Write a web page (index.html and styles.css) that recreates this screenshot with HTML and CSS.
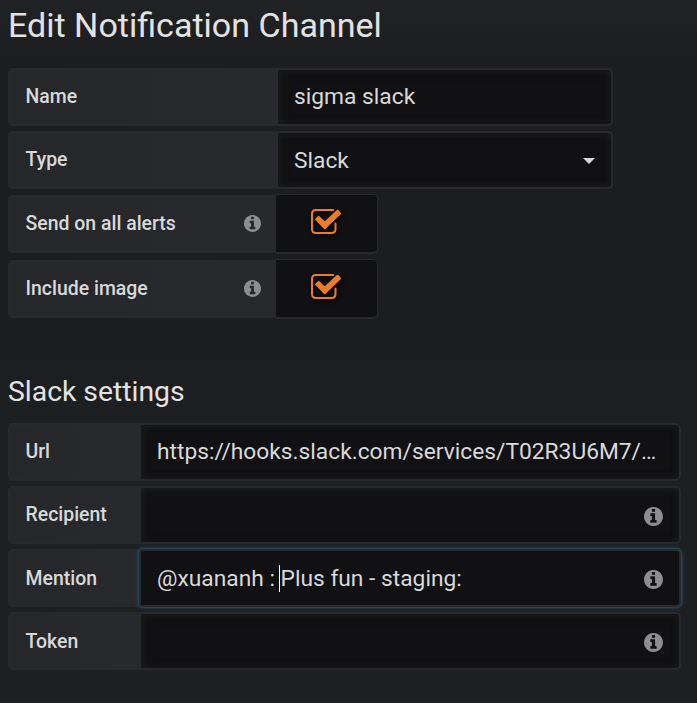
FILE: index.html
```html
<!DOCTYPE html>
<html lang="en">
<head>
<meta charset="utf-8">
<title>Edit Notification Channel</title>
<link rel="stylesheet" href="styles.css">
</head>
<body>
<svg class="sprite" aria-hidden="true">
  <symbol id="info" viewBox="0 128 1536 1536"><path d="M1024 1376v-160q0-14-9-23t-23-9h-96v-512q0-14-9-23t-23-9h-320q-14 0-23 9t-9 23v160q0 14 9 23t23 9h96v320h-96q-14 0-23 9t-9 23v160q0 14 9 23t23 9h448q14 0 23-9t9-23zm-128-896v-160q0-14-9-23t-23-9h-192q-14 0-23 9t-9 23v160q0 14 9 23t23 9h192q14 0 23-9t9-23zm640 416q0 209-103 385.500t-279.500 279.500-385.500 103-385.500-103-279.500-279.500-103-385.500 103-385.500 279.500-279.500 385.500-103 385.500 103 279.500 279.500 103 385.500z"/></symbol>
  <symbol id="check" viewBox="0 0 32 28"><path class="check-box" d="M23.200 2H6Q2 2 2 6V21Q2 25 6 25H21.500Q25.500 25 25.500 21V15.500"/><path class="check-tick" d="M6.200 11.200L8.700 8.900L14.700 14.700L27.500 2.800L30 5.500L14.700 20.300Z"/></symbol>
</svg>
<main class="page">
  <h1 class="title">Edit Notification Channel</h1>
  <form class="form">
    <section class="group general">
      <div class="row">
        <label class="label">Name</label>
        <div class="field">sigma slack</div>
      </div>
      <div class="row">
        <label class="label">Type</label>
        <div class="field select">Slack<span class="caret"></span></div>
      </div>
      <div class="row switch-row">
        <label class="label">Send on all alerts<svg class="info"><use href="#info"/></svg></label>
        <div class="switch"><svg class="check"><use href="#check"/></svg></div>
      </div>
      <div class="row switch-row">
        <label class="label">Include image<svg class="info"><use href="#info"/></svg></label>
        <div class="switch"><svg class="check"><use href="#check"/></svg></div>
      </div>
    </section>
    <h2 class="subtitle">Slack settings</h2>
    <section class="group settings">
      <div class="row">
        <label class="label">Url</label>
        <div class="field">https://hooks.slack.com/services/T02R3U6M7/…</div>
      </div>
      <div class="row">
        <label class="label">Recipient</label>
        <div class="field"><svg class="info"><use href="#info"/></svg></div>
      </div>
      <div class="row">
        <label class="label low">Mention</label>
        <div class="field focused"><span>@xuananh : </span><span class="cursor"></span><span>Plus fun - staging:</span><svg class="info"><use href="#info"/></svg></div>
      </div>
      <div class="row">
        <label class="label low">Token</label>
        <div class="field"><svg class="info"><use href="#info"/></svg></div>
      </div>
    </section>
  </form>
</main>
</body>
</html>
```
FILE: styles.css
```css
* { box-sizing: border-box; }
body {
  margin: 0;
  height: 703px;
  overflow: hidden;
  background: linear-gradient(#212224 0, #1c1d1f 60px, #1c1d1f 330px, #1e1f21 430px, #1e1f21 100%);
  color: #d8d9da;
  font-family: Roboto, sans-serif;
}
.sprite { display: none; }
.page { padding: 0 16px 0 8px; }
.title, .subtitle { margin: 0; font-weight: 400; white-space: nowrap; }
.title { height: 68px; padding-top: 5px; font-size: 34.05px; line-height: 40px; color: #e3e3e3; }
.subtitle { height: 57px; padding-top: 9px; margin-top: 48px; font-size: 28.35px; line-height: 34px; color: #e3e3e3; }
.group { display: flex; flex-direction: column; gap: 5px; }
.general { width: 605px; }
.settings { width: 673px; }
.row { display: flex; height: 58px; }
.label {
  display: flex;
  align-items: center;
  justify-content: space-between;
  flex: none;
  width: 268px;
  padding: 0 15.5px 1.5px 15.5px;
  border: 2px solid #28292b;
  border-right: 0;
  border-radius: 5px 0 0 5px;
  background: linear-gradient(90deg, #262729, #28292d);
  font-size: 19.45px;
  font-weight: 500;
}
.label.low { padding-bottom: 0; }
.settings .label { width: 131px; }
.field {
  display: flex;
  align-items: center;
  flex: 1;
  min-width: 0;
  padding: 0 16px 1px;
  border: 2px solid #28292b;
  border-radius: 0 5px 5px 0;
  background: #111113;
  box-shadow: inset 2px 2px 8px #1a1a1c, inset -1px -1px 6px #19191b;
  font-size: 22.77px;
  white-space: pre;
}
.field.select { padding-bottom: 0; }
.field.focused { border-radius: 3px 5px 5px 3px; padding-bottom: 0; box-shadow: 0 0 2px 1px #2b4a61, 0 0 6px #273f50; z-index: 1; }
.field .info { width: 19px; height: 19px; margin: 3px 0 0 auto; }
.info { width: 17px; height: 17px; fill: #8e8e8e; }
.cursor { width: 1px; height: 27px; margin: 0 1px 0 -2px; background: #fff; }
.caret { margin: 1px 0 0 auto; border: 6px solid transparent; border-top-color: #d8d9da; border-bottom: 0; }
.switch-row { margin-top: 1px; }
.switch-row + .switch-row { margin-top: 2px; }
.switch {
  display: flex;
  align-items: flex-start;
  justify-content: center;
  width: 102px;
  height: 60px;
  margin-top: -1px;
  padding-top: 13px;
  border: solid #28292b;
  border-width: 1px 1px 2px 0;
  border-radius: 0 5px 5px 0;
  background: #111113;
}
.check { width: 32px; height: 28px; margin-right: 2px; filter: drop-shadow(2px 2px 2px #000); }
.check-box { fill: none; stroke: #ed7b2d; stroke-width: 2; stroke-linecap: round; }
.check-tick { fill: #ed7b2d; stroke: #ed7b2d; stroke-width: 2; stroke-linejoin: round; }
```
